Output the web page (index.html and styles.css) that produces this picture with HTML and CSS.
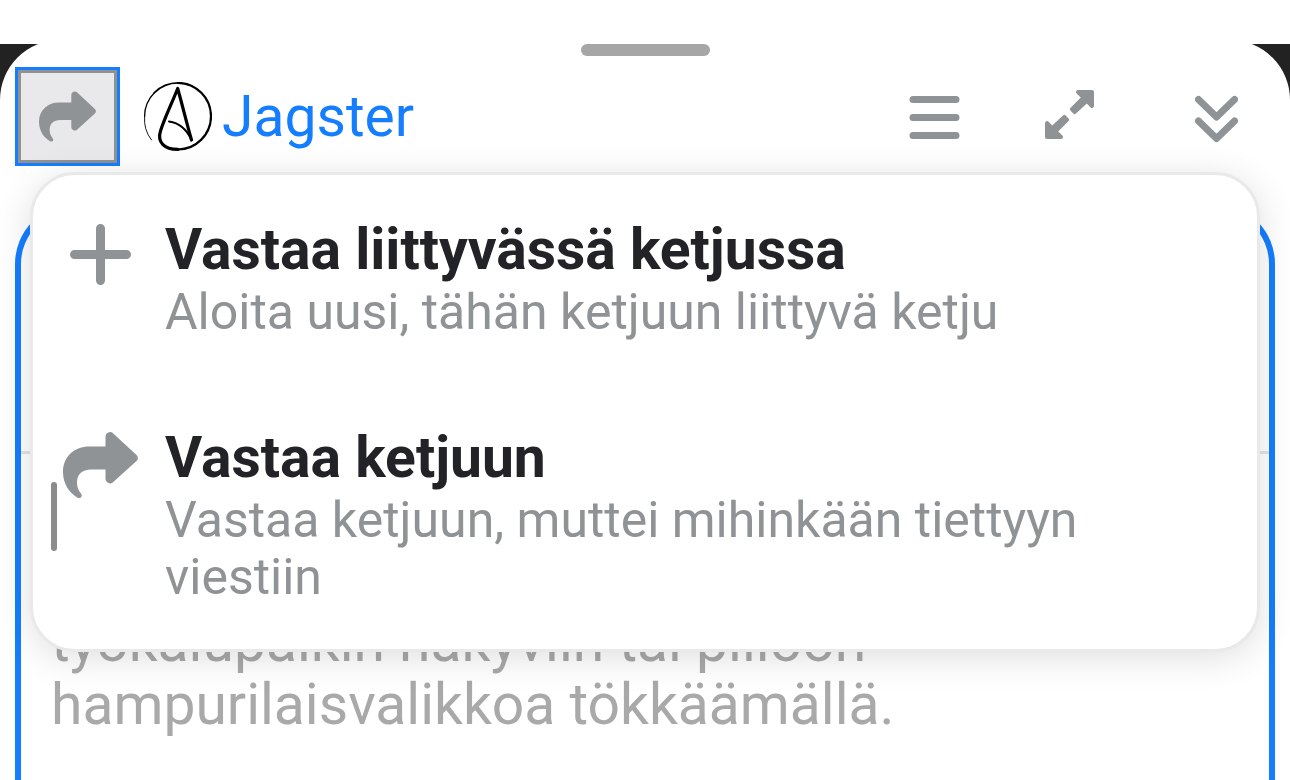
FILE: index.html
```html
<!DOCTYPE html>
<html lang="fi">
<head>
    <meta charset="UTF-8">
    <meta name="viewport" content="width=device-width, initial-scale=1">
    <title>Jagster</title>
    <link rel="stylesheet" href="styles.css">
</head>

<body>
    <svg class="symbols">
        <symbol id="share" viewBox="0 0 75 66">
            <path d="M42.5 14.5V4.5a4.5 4.5 0 0 1 7.5-3.3L73.5 23a4 4 0 0 1 0 6L50 50.3a4.5 4.5 0 0 1-7.5-3.3v-9.5H28c-9 0-14 5-14 13 0 6 2.500 9 4.300 11.500 1.500 2.500-1.300 5-3.800 3.700C7 61 0 53 0 40c0-16 12-25.500 26-25.500z"/>
        </symbol>
    </svg>

    <div class="top-bar"></div>

    <main class="composer">
        <div class="grip"></div>

        <div class="composer-header">
            <button class="reply-btn">
                <svg class="icon" width="57" height="51"><use href="#share"/></svg>
            </button>

            <a class="user" href="#">
                <svg class="avatar" viewBox="0 0 69 69" width="69" height="69">
                    <path stroke-width="0.900" d="M8.500 58A33.400 33.400 0 0 1 1.600 34.300"/>
                    <path stroke-width="1.300" d="M1.600 34.300A33.400 33.400 0 0 1 11.400 10.700"/>
                    <path stroke-width="1.800" d="M11.400 10.700A33.400 33.400 0 0 1 35 0.900"/>
                    <path stroke-width="2.200" d="M35 0.900A33.400 33.400 0 0 1 68 34.300A33.400 33.400 0 0 1 35 67.500"/>
                    <path stroke-width="3.200" d="M35 67.300C21 67.300 14 60 17.500 49C21.500 36 29 21 34.700 6.500C39 22 44 42 48.500 58"/>
                    <path stroke-width="2" d="M48.500 58C44 48 37 41 26 39.500"/>
                </svg>
                <span>Jagster</span>
            </a>

            <div class="controls">
                <button class="control">
                    <svg class="icon-line" viewBox="0 -7 51 55" width="51" height="55">
                        <path d="M4 3.500h43M4 21.500h43M4 39.500h43"/>
                    </svg>
                </button>
                <button class="control">
                    <svg class="icon" viewBox="0 -1 49 55" width="49" height="55">
                        <path id="arrow" d="M33 0h14a2 2 0 0 1 2 2v14a2 2 0 0 1-3.400 1.400L41.800 13.600 31 23.600a1.800 1.800 0 0 1-2.600 0L25.400 20.600a1.800 1.800 0 0 1 0-2.600L35.800 7.600 31.600 3.400A2 2 0 0 1 33 0z"/>
                        <use href="#arrow" transform="rotate(180 24.500 24.500)"/>
                    </svg>
                </button>
                <button class="control control-close">
                    <svg class="icon-line" viewBox="0 -7 43 55" width="43" height="55">
                        <path d="M3.500 3.500l18 17.500 18-17.500M3.500 25l18 17.500L39.500 25"/>
                    </svg>
                </button>
            </div>
        </div>

        <div class="editor">
            <div class="editor-toolbar"></div>
            <textarea class="editor-input" aria-label="Viesti" placeholder="työkalupalkin näkyviin tai piiloon hampurilaisvalikkoa tökkäämällä."></textarea>
        </div>

        <div class="menu">
            <button class="menu-item">
                <span class="menu-icon">
                    <svg class="icon-plus" viewBox="0 0 61 61" width="61" height="61">
                        <path d="M30.500 4.500v52M4.500 30.500h52"/>
                    </svg>
                </span>
                <span class="menu-text">
                    <span class="menu-title">Vastaa liittyvässä ketjussa</span>
                    <span class="menu-desc">Aloita uusi, tähän ketjuun liittyvä ketju</span>
                </span>
            </button>
            <button class="menu-item">
                <span class="menu-icon">
                    <svg class="icon" width="75" height="66"><use href="#share"/></svg>
                </span>
                <span class="menu-text">
                    <span class="menu-title">Vastaa ketjuun</span>
                    <span class="menu-desc">Vastaa ketjuun, muttei mihinkään tiettyyn viestiin</span>
                </span>
            </button>
        </div>

        <!-- text cursor shows through on top of the menu -->
        <div class="caret"></div>
    </main>
</body>
</html>
```

FILE: styles.css
```css
* {
    box-sizing: border-box;
}

body {
    margin: 0;
    height: 100vh;
    display: flex;
    flex-direction: column;
    overflow: hidden;
    background: #222;
    color: #222326;
    font-family: Roboto, sans-serif;
    font-size: 57px;
}

button {
    margin: 0;
    padding: 0;
    border: none;
    background: none;
    color: inherit;
    font: inherit;
    text-align: left;
    cursor: pointer;
}

svg {
    display: block;
}

.symbols {
    position: absolute;
    width: 0;
    height: 0;
}

.icon {
    fill: #8f9396;
}

.icon-line,
.icon-plus {
    fill: none;
    stroke: #8f9396;
    stroke-width: 7;
    stroke-linecap: round;
    stroke-linejoin: round;
}

.icon-plus {
    stroke-width: 9;
}

.top-bar {
    flex: none;
    height: 44px;
    background: #fff;
    position: relative;
    z-index: 1;
}

.composer {
    position: relative;
    flex: 1;
    display: flex;
    flex-direction: column;
    margin-top: -4px;
    padding: 4px 15px 0;
    background: #fff;
    border-radius: 60px 60px 0 0;
}

.grip {
    flex: none;
    align-self: center;
    width: 129px;
    height: 12px;
    border-radius: 6px;
    background: #a6a6a6;
}

.composer-header {
    display: flex;
    align-items: center;
    margin-top: 11px;
    padding-right: 37px;
}

.reply-btn {
    display: flex;
    align-items: center;
    justify-content: center;
    width: 105px;
    height: 99px;
    margin-right: 23px;
    border: 3px solid #919191;
    outline: 3px solid #147eff;
    outline-offset: -3px;
    background: #e9e9eb;
    box-shadow: inset 0 0 0 3px #919191;
}

.user {
    display: flex;
    align-items: center;
    gap: 10px;
    color: #147eff;
    text-decoration: none;
}

.avatar {
    fill: none;
    stroke: #000;
    stroke-linecap: round;
    stroke-linejoin: round;
}

.controls {
    display: flex;
    align-items: center;
    gap: 85px;
    margin-left: auto;
}

.control-close {
    margin-left: 16px;
}

.editor {
    flex: 1;
    display: flex;
    flex-direction: column;
    margin-top: 38px;
    border: 6px solid #147eff;
    border-bottom: none;
    border-radius: 60px 60px 0 0;
    overflow: hidden;
}

.editor-toolbar {
    height: 244px;
    border-bottom: 3px solid #e4e4e4;
}

.editor-input {
    flex: 1;
    width: 100%;
    padding: 156px 30px 0;
    border: none;
    outline: none;
    resize: none;
    overflow: hidden;
    background: #fff;
    font: inherit;
    line-height: 63px;
}

.editor-input::placeholder {
    color: #a9a9a9;
}

.menu {
    position: absolute;
    top: 132px;
    left: 30px;
    right: 30px;
    padding-bottom: 1px;
    border: 3px solid #e9e9ea;
    border-radius: 45px;
    background: #fff;
    box-shadow: 0 6px 36px rgba(0, 0, 0, 0.13);
}

.menu-item {
    display: flex;
    align-items: flex-start;
    gap: 27px;
    width: 100%;
    padding: 41px 30px 42px;
}

.menu-icon {
    flex: none;
    display: flex;
    justify-content: center;
    width: 75px;
    padding-top: 8px;
}

.menu-title,
.menu-desc {
    display: block;
}

.menu-title {
    font-weight: bold;
    line-height: 68px;
}

.menu-desc {
    color: #8f9396;
    font-size: 50px;
    line-height: 57px;
}

.caret {
    position: absolute;
    top: 442px;
    left: 51px;
    width: 6px;
    height: 69px;
    border-radius: 3px;
    background: #8c8c8c;
}
```
